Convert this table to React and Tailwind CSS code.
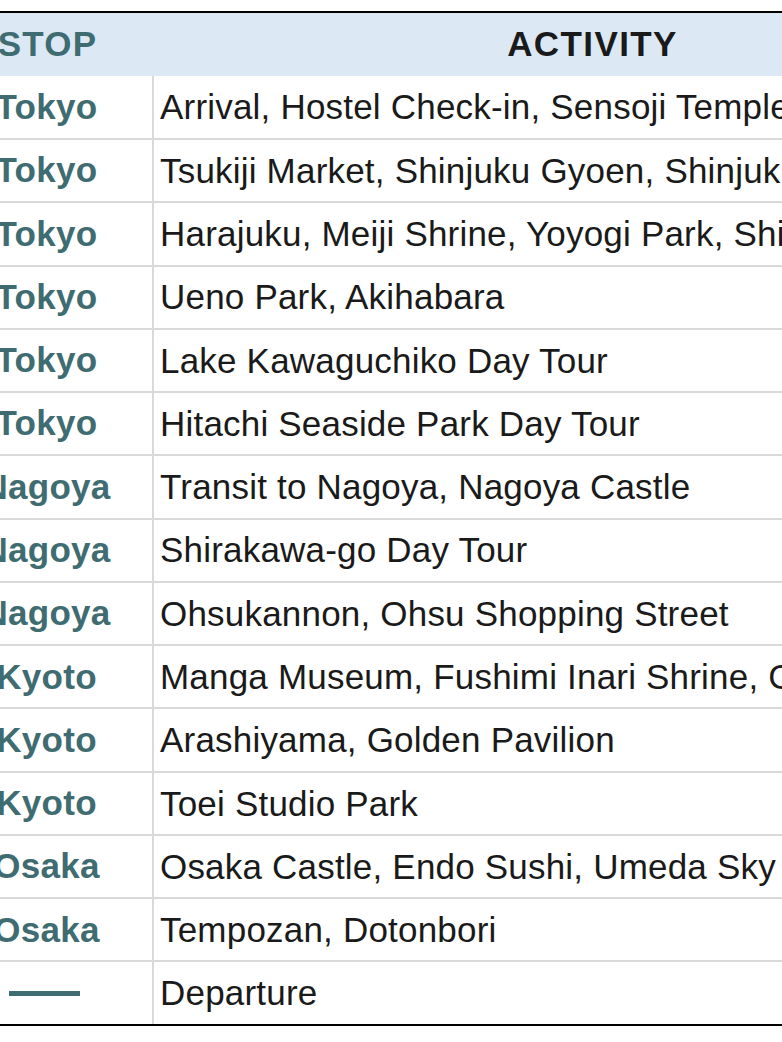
const rows = [
  ["Tokyo", "Arrival, Hostel Check-in, Sensoji Temple"],
  ["Tokyo", "Tsukiji Market, Shinjuku Gyoen, Shinjuku"],
  ["Tokyo", "Harajuku, Meiji Shrine, Yoyogi Park, Shibuya"],
  ["Tokyo", "Ueno Park, Akihabara"],
  ["Tokyo", "Lake Kawaguchiko Day Tour"],
  ["Tokyo", "Hitachi Seaside Park Day Tour"],
  ["Nagoya", "Transit to Nagoya, Nagoya Castle"],
  ["Nagoya", "Shirakawa-go Day Tour"],
  ["Nagoya", "Ohsukannon, Ohsu Shopping Street"],
  ["Kyoto", "Manga Museum, Fushimi Inari Shrine, Gion"],
  ["Kyoto", "Arashiyama, Golden Pavilion"],
  ["Kyoto", "Toei Studio Park"],
  ["Osaka", "Osaka Castle, Endo Sushi, Umeda Sky Building"],
  ["Osaka", "Tempozan, Dotonbori"],
  [null, "Departure"],
];

export default function App() {
  return (
    <div
      className="w-[782px] h-[1042px] overflow-hidden bg-white pt-[11px]"
      style={{ fontFamily: '"Liberation Sans", Arial, sans-serif' }}
    >
      <div className="ml-[-59px] w-[1090px] border-t-2 border-b-2 border-black">
        {/* header */}
        <div className="flex h-[63px] bg-[#dce9f5] text-[35px] font-bold">
          <div className="w-[213px] flex items-center justify-center text-[#3f6c71] tracking-[1.2px]">
            STOP
          </div>
          <div className="flex-1 flex items-center justify-center text-[#1a1a1a] tracking-[1.4px]">
            ACTIVITY
          </div>
        </div>

        {rows.map(([stop, activity], i) => (
          <div
            key={i}
            className={`flex text-[35px] ${i === 0 ? "h-[62px]" : "h-[63.27px] border-t-2 border-[#d9d9d9]"}`}
          >
            <div className="w-[213px] shrink-0 border-r-2 border-[#d9d9d9] flex items-center justify-center font-bold text-[#3f6c71] tracking-[0.3px]">
              {stop ? stop : <div className="w-[71px] h-[5px] bg-[#3f6c71] mr-[4px]" />}
            </div>
            <div className="flex-1 flex items-center pl-[6px] pt-[1px] text-[#1a1a1a] whitespace-nowrap tracking-[0.2px]">
              {activity}
            </div>
          </div>
        ))}
      </div>
    </div>
  );
}
